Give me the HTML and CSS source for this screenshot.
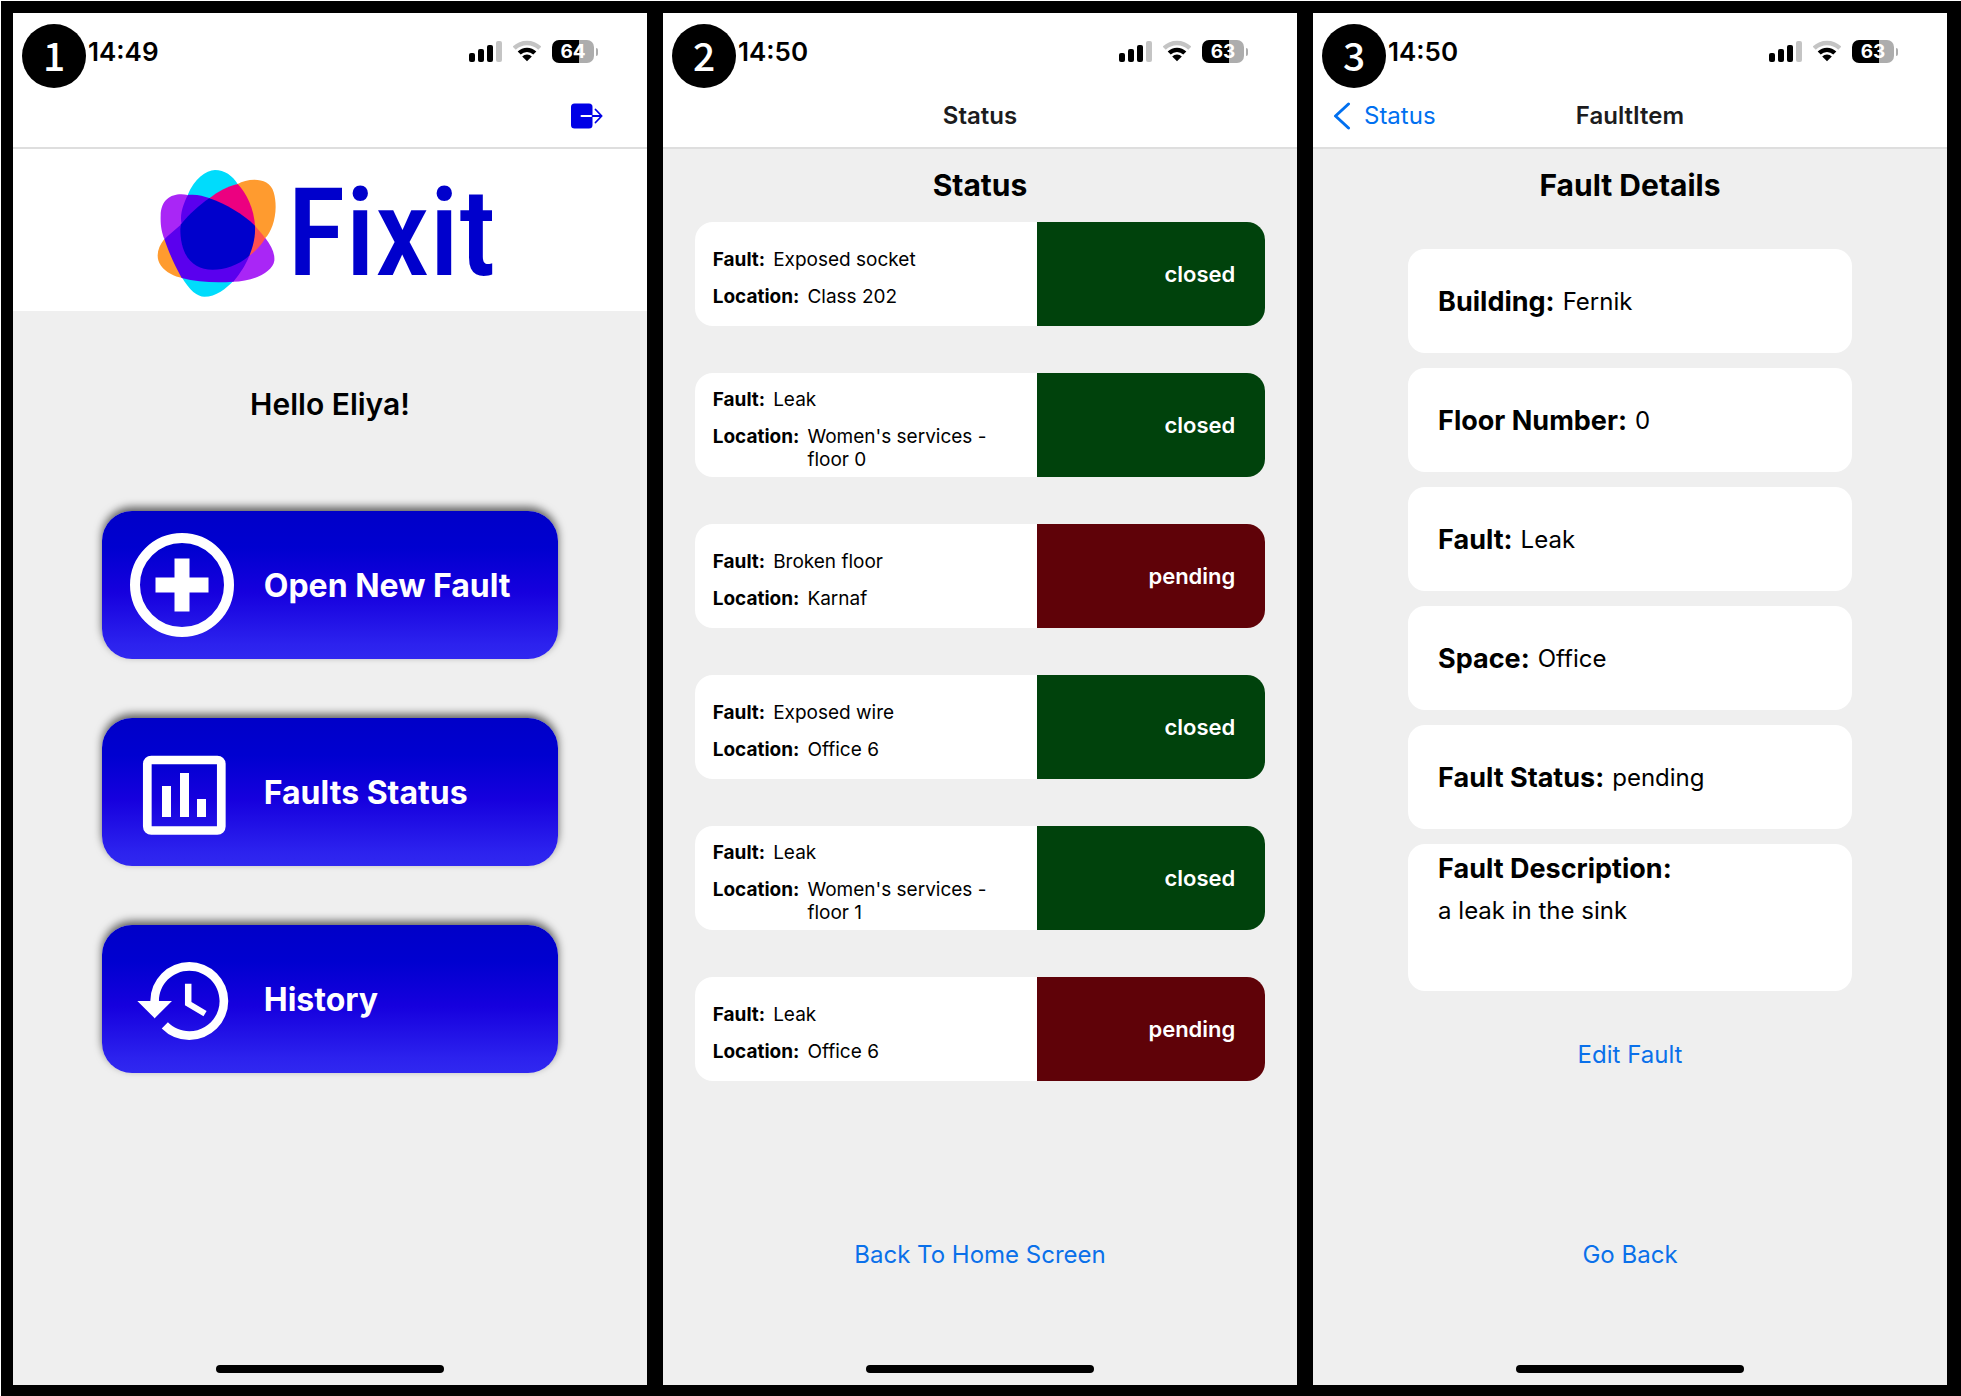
FILE: index.html
```html
<!DOCTYPE html>
<html lang="en">
<head>
<meta charset="utf-8">
<meta name="viewport" content="width=device-width, initial-scale=1">
<title>Fixit</title>
<link rel="stylesheet" href="styles.css">
</head>
<body>
<svg class="sprite" aria-hidden="true">
  <symbol id="signal" viewBox="0 0 33 22">
    <rect x="0" y="13" width="6" height="9" rx="2"/>
    <rect x="9" y="9" width="6" height="13" rx="2"/>
    <rect x="18" y="5" width="6" height="17" rx="2"/>
    <rect x="27" y="1" width="6" height="21" rx="2" fill="#c4c4c4"/>
  </symbol>
  <symbol id="wifi" viewBox="0 0 28 22">
    <g fill="none" stroke-width="4.4">
      <path d="M1.2 8.2A18.2 18.2 0 0 1 26.8 8.2" stroke="#c4c4c4"/>
      <path d="M6.2 13A11.2 11.2 0 0 1 21.8 13" stroke="#000"/>
    </g>
    <path d="M9.2 16.4A6.8 6.8 0 0 1 18.8 16.4L14 21.2Z"/>
  </symbol>
</svg>
<main class="board">
  <section class="screen" aria-label="Home">
    <span class="badge">1</span>
    <div class="statusbar">
      <time class="clock">14:49</time>
      <svg class="signal"><use href="#signal"/></svg>
      <svg class="wifi"><use href="#wifi"/></svg>
      <span class="battery">64</span>
    </div>
    <header class="nav">
      <button class="logout" type="button" aria-label="Log out">
        <svg viewBox="0 0 32 26" width="32" height="26">
          <rect x="0" y="0.5" width="21.5" height="25" rx="3.5" fill="#0000e6"/>
          <path d="M10.5 13H21.5" stroke="#fff" stroke-width="2" stroke-linecap="round"/>
          <path d="M21.5 13H30.5M24.5 6.5L30.7 13L24.5 19.5" fill="none" stroke="#0000e6" stroke-width="1.8" stroke-linecap="round" stroke-linejoin="round"/>
        </svg>
      </button>
    </header>
    <div class="brand">
      <svg class="brand-mark" viewBox="55 40 363 387" aria-hidden="true">
        <path fill="#00dcfc" d="M150 118C170 70 205 43 232 43C260 43 285 60 300 85L215 140ZM130 360C155 405 180 423 200 423C235 423 265 400 290 372Z"/>
        <path fill="#ff9b2f" d="M300 85C330 68 395 62 408 110C424 165 405 225 383 247L345 215L295 90ZM80 250C60 275 52 305 70 330C85 350 110 362 134 367L110 280Z"/>
        <path fill="#a926f6" d="M150 118C110 110 70 125 69 180C68 210 72 230 80 250L140 215ZM383 247C400 270 412 290 410 315C405 350 345 378 285 378L325 290Z"/>
        <path fill="#5a00ee" d="M150 118C175 115 195 120 217 128L340 290L335 300C325 325 310 350 287 378C240 382 180 380 132 367C112 330 95 295 80 250L132 205C125 175 138 145 150 118Z"/>
        <path fill="#ec0080" d="M215 128C240 108 270 92 300 85C325 110 350 160 352 212Z"/>
        <path fill="#ff5050" d="M350 208L383 247C370 270 355 285 332 303Z"/>
        <path fill="#0000cc" d="M215 128C265 145 315 175 352 210C354 245 345 275 335 300C300 330 260 342 225 342C165 342 128 300 128 220L130 206C155 175 185 148 215 128Z"/>
      </svg>
      <span class="brand-name">Fixit</span>
    </div>
    <h1 class="greeting">Hello Eliya!</h1>
    <nav class="menu">
      <button class="tile" type="button">
        <svg class="tile-icon" viewBox="0 0 104 104">
          <circle cx="52" cy="52" r="47" fill="none" stroke="#fff" stroke-width="10"/>
          <path d="M25.500 52H78.500M52 25.500V78.500" stroke="#fff" stroke-width="15"/>
        </svg>
        <span>Open New Fault</span>
      </button>
      <button class="tile" type="button">
        <svg class="tile-icon" viewBox="0 0 104 104">
          <rect x="17.300" y="20" width="74" height="70.500" rx="4" fill="none" stroke="#fff" stroke-width="8.700"/>
          <path d="M36.500 46V77M54.500 33V77M71.500 59V77" stroke="#fff" stroke-width="9"/>
        </svg>
        <span>Faults Status</span>
      </button>
      <button class="tile" type="button">
        <svg class="tile-icon" viewBox="0 0 104 104">
          <path transform="translate(3 2) scale(4.330)" fill="#fff" d="M13 3a9 9 0 0 0-9 9H1l3.890 3.890.07.14L9 12H6c0-3.870 3.130-7 7-7s7 3.130 7 7-3.130 7-7 7c-1.930 0-3.680-.79-4.940-2.060l-1.420 1.420A8.954 8.954 0 0 0 13 21a9 9 0 0 0 0-18zm-1 5v5l4.280 2.540.72-1.210-3.500-2.080V8H12z"/>
        </svg>
        <span>History</span>
      </button>
    </nav>
    <div class="home-indicator push"></div>
  </section>

  <section class="screen" aria-label="Status">
    <span class="badge">2</span>
    <div class="statusbar">
      <time class="clock">14:50</time>
      <svg class="signal"><use href="#signal"/></svg>
      <svg class="wifi"><use href="#wifi"/></svg>
      <span class="battery">63</span>
    </div>
    <header class="nav"><span class="nav-title">Status</span></header>
    <h1 class="title">Status</h1>
    <ul class="faults">
      <li class="fault">
        <dl class="fault-info"><div><dt>Fault:</dt><dd>Exposed socket</dd></div><div><dt>Location:</dt><dd>Class 202</dd></div></dl>
        <span class="state closed">closed</span>
      </li>
      <li class="fault">
        <dl class="fault-info"><div><dt>Fault:</dt><dd>Leak</dd></div><div><dt>Location:</dt><dd>Women's services - floor 0</dd></div></dl>
        <span class="state closed">closed</span>
      </li>
      <li class="fault">
        <dl class="fault-info"><div><dt>Fault:</dt><dd>Broken floor</dd></div><div><dt>Location:</dt><dd>Karnaf</dd></div></dl>
        <span class="state pending">pending</span>
      </li>
      <li class="fault">
        <dl class="fault-info"><div><dt>Fault:</dt><dd>Exposed wire</dd></div><div><dt>Location:</dt><dd>Office 6</dd></div></dl>
        <span class="state closed">closed</span>
      </li>
      <li class="fault">
        <dl class="fault-info"><div><dt>Fault:</dt><dd>Leak</dd></div><div><dt>Location:</dt><dd>Women's services - floor 1</dd></div></dl>
        <span class="state closed">closed</span>
      </li>
      <li class="fault">
        <dl class="fault-info"><div><dt>Fault:</dt><dd>Leak</dd></div><div><dt>Location:</dt><dd>Office 6</dd></div></dl>
        <span class="state pending">pending</span>
      </li>
    </ul>
    <button class="link push" type="button">Back To Home Screen</button>
    <div class="home-indicator"></div>
  </section>

  <section class="screen" aria-label="Fault item">
    <span class="badge">3</span>
    <div class="statusbar">
      <time class="clock">14:50</time>
      <svg class="signal"><use href="#signal"/></svg>
      <svg class="wifi"><use href="#wifi"/></svg>
      <span class="battery">63</span>
    </div>
    <header class="nav">
      <a class="back" href="#">
        <svg viewBox="0 0 18 28" width="18" height="28" aria-hidden="true"><path d="M15.500 2L2.500 14L15.500 26" fill="none" stroke="#0070f0" stroke-width="3" stroke-linecap="round" stroke-linejoin="round"/></svg>
        <span>Status</span>
      </a>
      <span class="nav-title">FaultItem</span>
    </header>
    <h1 class="title">Fault Details</h1>
    <dl class="details">
      <div class="detail"><dt>Building:</dt><dd>Fernik</dd></div>
      <div class="detail"><dt>Floor Number:</dt><dd>0</dd></div>
      <div class="detail"><dt>Fault:</dt><dd>Leak</dd></div>
      <div class="detail"><dt>Space:</dt><dd>Office</dd></div>
      <div class="detail"><dt>Fault Status:</dt><dd>pending</dd></div>
      <div class="detail description"><dt>Fault Description:</dt><dd>a leak in the sink</dd></div>
    </dl>
    <button class="link edit" type="button">Edit Fault</button>
    <button class="link push" type="button">Go Back</button>
    <div class="home-indicator"></div>
  </section>
</main>
</body>
</html>
```
FILE: styles.css
```css
* { box-sizing: border-box; }

body {
  margin: 0;
  background: #000;
  color: #000;
  font-family: Inter, "Liberation Sans", sans-serif;
}

button {
  border: 0;
  padding: 0;
  background: none;
  font: inherit;
  cursor: pointer;
}

h1, ul, dl, dd { margin: 0; padding: 0; }

.sprite { position: absolute; width: 0; height: 0; }

.board {
  display: grid;
  grid-template-columns: repeat(3, 1fr);
  gap: 16px;
  min-height: 100vh;
  padding: 12px 14px 11px 12px;
  border-top: 1px solid #fff;
  border-left: 1px solid #fff;
}

.screen {
  position: relative;
  display: flex;
  flex-direction: column;
  background: #efefef;
}

.badge {
  position: absolute;
  top: 11px;
  left: 9px;
  width: 64px;
  height: 64px;
  border-radius: 50%;
  background: #000;
  color: #fff;
  font: 500 39px/60px "Noto Sans CJK SC", sans-serif;
  text-align: center;
}

/* Phone status bar */
.statusbar {
  display: flex;
  align-items: center;
  height: 69px;
  padding: 7px 49px 0 75px;
  background: #fff;
}

.clock { margin-right: auto; font-size: 26px; font-weight: 600; }
.signal { width: 33px; height: 22px; margin-right: 11px; }
.wifi { width: 28px; height: 22px; margin-right: 11px; }

.battery {
  position: relative;
  width: 42px;
  height: 23px;
  margin-right: 4px;
  border-radius: 7px;
  background: linear-gradient(90deg, #000 65%, #adadad 65%);
  color: #fff;
  font-size: 19px;
  font-weight: 700;
  line-height: 23px;
  text-align: center;
}

.battery::after {
  content: "";
  position: absolute;
  top: 8px;
  right: -4px;
  width: 2px;
  height: 8px;
  border-radius: 0 2px 2px 0;
  background: #adadad;
}

/* Navigation bar */
.nav {
  display: grid;
  grid-template-columns: 1fr auto 1fr;
  align-items: center;
  height: 67px;
  padding: 2px 44px 0 20px;
  border-bottom: 2px solid #dedede;
  background: #fff;
}

.nav:has(.nav-title) { padding: 2px 20px 0; }
.nav-title { grid-column: 2; color: #1c1c1e; font-size: 24px; font-weight: 600; }
.logout { grid-column: 3; justify-self: end; display: flex; }

.back {
  display: flex;
  align-items: center;
  gap: 13px;
  color: #0070f0;
  font-size: 24px;
  text-decoration: none;
}

/* Home */
.brand {
  display: flex;
  align-items: center;
  justify-content: center;
  gap: 10px;
  height: 162px;
  padding: 6px 8px 0 0;
  background: #fff;
}

.brand-mark { width: 121px; height: 129px; }

.brand-name {
  color: #0000cc;
  font-family: "Roboto Condensed", "Open Sans Condensed", Roboto, sans-serif;
  font-size: 122px;
  font-weight: 500;
  line-height: 129px;
}

.greeting {
  padding: 73px 0 87px;
  font-size: 30px;
  font-weight: 600;
  line-height: 40px;
  text-align: center;
}

.menu {
  display: flex;
  flex-direction: column;
  align-items: center;
  gap: 59px;
}

.tile {
  display: flex;
  align-items: center;
  gap: 30px;
  width: 72%;
  height: 148px;
  padding: 0 28px;
  border-radius: 30px;
  background: linear-gradient(#0000c8, #0000d0 25%, #1600de 55%, #2c22ee 90%, #3028f0);
  box-shadow: 0 -4px 8px rgba(0, 0, 0, 0.6);
  color: #fff;
  font-size: 32px;
  font-weight: 700;
  white-space: nowrap;
}

.tile-icon { flex: none; width: 104px; height: 104px; }

/* Status list */
.title {
  font-size: 30px;
  font-weight: 700;
  line-height: 73px;
  text-align: center;
}

.faults {
  display: flex;
  flex-direction: column;
  gap: 47px;
  padding: 0 5%;
  list-style: none;
}

.fault {
  display: flex;
  height: 104px;
  border-radius: 18px;
  overflow: hidden;
  background: #fff;
}

.fault-info {
  display: flex;
  flex: 1;
  flex-direction: column;
  justify-content: center;
  gap: 14px;
  padding: 8px 30px 0 18px;
  font-size: 19px;
  line-height: 23px;
}

.fault-info div { display: flex; gap: 8px; }
dt { font-weight: 700; }

.state {
  flex: 0 0 40%;
  padding-right: 30px;
  color: #fff;
  font-size: 22px;
  font-weight: 600;
  line-height: 104px;
  text-align: right;
}

.closed { background: #00420c; }
.pending { background: #5f0208; }

/* Fault details */
.details {
  display: flex;
  flex-direction: column;
  gap: 15px;
  width: 70%;
  margin: 27px auto 0;
}

.detail {
  display: flex;
  align-items: center;
  gap: 8px;
  height: 104px;
  padding: 0 30px;
  border-radius: 17px;
  background: #fff;
  font-size: 24px;
}

.detail dt { font-size: 27px; }

.description {
  flex-direction: column;
  align-items: flex-start;
  gap: 11px;
  height: 147px;
  padding-top: 8px;
}

/* Footer */
.link {
  align-self: center;
  color: #0a70ea;
  font-size: 24px;
  line-height: 32px;
}

.edit { margin-top: 48px; }
.push { margin-top: auto; }

.home-indicator {
  flex: none;
  align-self: center;
  width: 36%;
  height: 8px;
  margin-bottom: 12px;
  border-radius: 4px;
  background: #000;
}

.link + .home-indicator { margin-top: 94px; }
```
